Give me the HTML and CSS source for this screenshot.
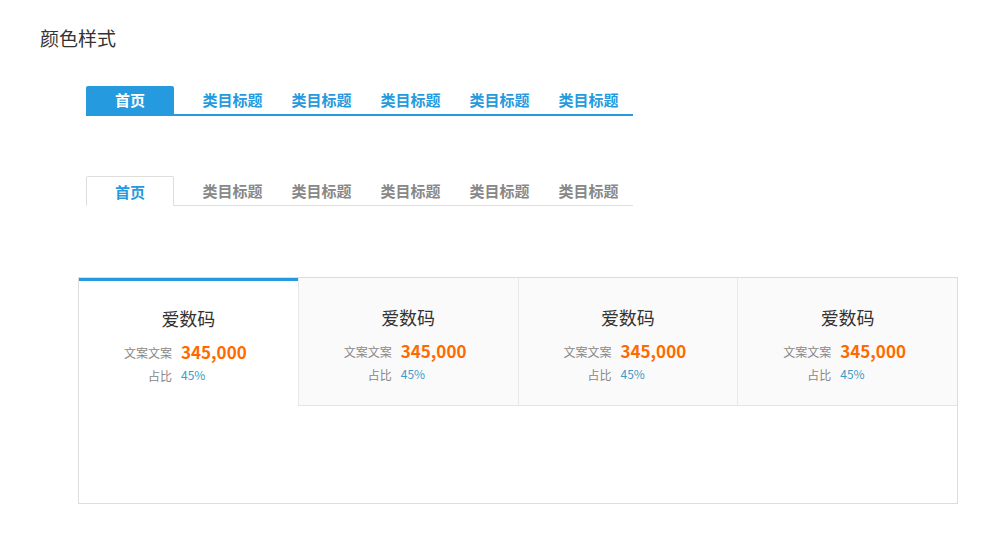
FILE: index.html
```html
<!DOCTYPE html>
<html lang="zh-CN">
<head>
    <meta charset="UTF-8">
    <title>颜色样式</title>
    <link rel="stylesheet" href="styles.css">
</head>
<body>
    <h2 class="page-title">颜色样式</h2>

    <div class="demo">
        <ul class="tabs tabs-solid">
            <li class="tab active">首页</li>
            <li class="tab">类目标题</li>
            <li class="tab">类目标题</li>
            <li class="tab">类目标题</li>
            <li class="tab">类目标题</li>
            <li class="tab">类目标题</li>
        </ul>

        <ul class="tabs tabs-line">
            <li class="tab active">首页</li>
            <li class="tab">类目标题</li>
            <li class="tab">类目标题</li>
            <li class="tab">类目标题</li>
            <li class="tab">类目标题</li>
            <li class="tab">类目标题</li>
        </ul>
    </div>

    <div class="stat-panel">
        <div class="stat-row">
            <div class="stat-card active">
                <div class="stat-name">爱数码</div>
                <div class="stat-grid">
                    <span class="stat-label">文案文案</span>
                    <span class="stat-value">345,000</span>
                    <span class="stat-label">占比</span>
                    <span class="stat-rate">45%</span>
                </div>
            </div>
            <div class="stat-card">
                <div class="stat-name">爱数码</div>
                <div class="stat-grid">
                    <span class="stat-label">文案文案</span>
                    <span class="stat-value">345,000</span>
                    <span class="stat-label">占比</span>
                    <span class="stat-rate">45%</span>
                </div>
            </div>
            <div class="stat-card">
                <div class="stat-name">爱数码</div>
                <div class="stat-grid">
                    <span class="stat-label">文案文案</span>
                    <span class="stat-value">345,000</span>
                    <span class="stat-label">占比</span>
                    <span class="stat-rate">45%</span>
                </div>
            </div>
            <div class="stat-card">
                <div class="stat-name">爱数码</div>
                <div class="stat-grid">
                    <span class="stat-label">文案文案</span>
                    <span class="stat-value">345,000</span>
                    <span class="stat-label">占比</span>
                    <span class="stat-rate">45%</span>
                </div>
            </div>
        </div>
    </div>
</body>
</html>
```

FILE: styles.css
```css
body {
    margin: 0;
    padding: 26px 0 0 40px;
    font-family: "Noto Sans CJK SC", "Microsoft YaHei", sans-serif;
    color: #333;
    background-color: white;
}
.page-title {
    margin: 0;
    font-size: 19px;
    font-weight: normal;
    line-height: 24px;
}
.demo {
    margin-left: 46px;
}
.tabs {
    display: flex;
    width: 547px;
    margin: 0;
    padding: 0;
    list-style: none;
    box-sizing: border-box;
}
.tab {
    width: 89px;
    text-align: center;
    font-size: 15px;
    font-weight: bold;
    box-sizing: border-box;
}
.tab.active {
    width: 88px;
    margin-right: 14px;
}

/* solid style */
.tabs-solid {
    margin-top: 36px;
    border-bottom: 2px solid #259ade;
}
.tabs-solid .tab {
    height: 28px;
    line-height: 28px;
    color: #259ade;
}
.tabs-solid .tab.active {
    background-color: #259ade;
    color: white;
    border-radius: 2px 2px 0 0;
}

/* line style */
.tabs-line {
    margin-top: 60px;
    border-bottom: 1px solid #ddd;
}
.tabs-line .tab {
    height: 29px;
    line-height: 30px;
    color: #888;
}
.tabs-line .tab.active {
    height: 30px;
    margin-bottom: -1px;
    color: #259ade;
    border: 1px solid #ddd;
    border-bottom: 1px solid white;
    border-radius: 2px 2px 0 0;
    line-height: 29px;
}

/* stat panel */
.stat-panel {
    width: 880px;
    height: 227px;
    margin: 71px 0 0 38px;
    border: 1px solid #ddd;
    box-sizing: border-box;
}
.stat-row {
    display: flex;
}
.stat-card {
    flex: 1;
    height: 128px;
    padding-top: 27px;
    background-color: #fafafa;
    border-left: 1px solid #e8e8e8;
    border-bottom: 1px solid #e5e5e5;
    box-sizing: border-box;
}
.stat-card.active {
    background-color: white;
    border-left: none;
    border-bottom: none;
    border-top: 3px solid #259ade;
    padding-top: 25px;
    height: 129px;
}
.stat-name {
    text-align: center;
    font-size: 18px;
    line-height: 24px;
    color: #333;
}
.stat-grid {
    display: grid;
    grid-template-columns: 93px 1fr;
    column-gap: 9px;
    row-gap: 1px;
    align-items: center;
    margin-top: 11px;
}
.stat-label {
    text-align: right;
    font-size: 12px;
    color: #888;
}
.stat-value {
    font-size: 17px;
    font-weight: bold;
    line-height: 22px;
    color: #ff6a00;
}
.stat-rate {
    font-size: 12px;
    line-height: 22px;
    color: #3d9bc8;
}
```
